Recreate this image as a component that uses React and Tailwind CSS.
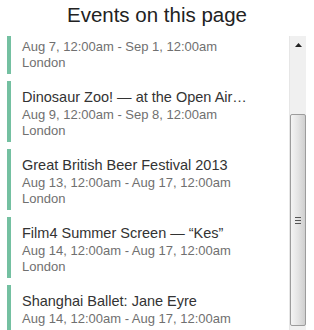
const EVENTS = [
  { title: 'The Old Vic Summer Season — Macbeth', when: 'Aug 7, 12:00am - Sep 1, 12:00am', where: 'London' },
  { title: 'Dinosaur Zoo! — at the Open Air Theatre', when: 'Aug 9, 12:00am - Sep 8, 12:00am', where: 'London' },
  { title: 'Great British Beer Festival 2013', when: 'Aug 13, 12:00am - Aug 17, 12:00am', where: 'London' },
  { title: 'Film4 Summer Screen — “Kes”', when: 'Aug 14, 12:00am - Aug 17, 12:00am', where: 'London' },
  { title: 'Shanghai Ballet: Jane Eyre', when: 'Aug 14, 12:00am - Aug 17, 12:00am', where: 'London' },
]

function EventCard({ event }) {
  return (
    <div className="ml-[7px] mr-[42px] flex h-[61px] flex-col border-l-4 border-[#74c0a1] pl-[11px] pt-[6px]">
      <div className="truncate text-[14.5px] leading-[20px] text-[#333]">{event.title}</div>
      <div className="text-[13px] leading-[16px] text-[#707070]">{event.when}</div>
      <div className="text-[13px] leading-[16px] text-[#707070]">{event.where}</div>
    </div>
  )
}

// Classic Windows-style scrollbar, drawn as a static column.
function Scrollbar() {
  return (
    <div className="flex w-[17px] shrink-0 flex-col border-l border-[#e6e6e6] bg-[#f0f0f0]">
      <div className="flex h-[17px] items-center justify-center">
        <svg width="7" height="4" viewBox="0 0 7 4">
          <path d="M3.5 0 L7 4 L0 4 Z" fill="#222" />
        </svg>
      </div>
      <div className="h-[61px]" />
      <div className="flex h-[212px] items-center justify-center rounded-[2px] border border-[#9c9c9c] bg-gradient-to-r from-[#f4f4f4] via-[#e4e4e4] to-[#cfcfcf]">
        <div className="flex flex-col gap-[2px]">
          <div className="h-px w-[6px] bg-[#555]" />
          <div className="h-px w-[6px] bg-[#555]" />
          <div className="h-px w-[6px] bg-[#555]" />
        </div>
      </div>
    </div>
  )
}

export default function App() {
  return (
    <div className="flex h-[330px] w-[314px] flex-col overflow-hidden bg-white font-['Liberation_Sans',Arial,sans-serif]">
      <div className="flex h-[36px] shrink-0 items-start justify-center pt-[2px] text-[20.5px] leading-[26px] text-[#222]">
        Events on this page
      </div>
      <div className="flex min-h-0 flex-1 pr-[8px]">
        <div className="min-w-0 flex-1 overflow-hidden">
          <div className="-mt-[23px] flex flex-col gap-[7px]">
            {EVENTS.map((e) => (
              <EventCard key={e.title} event={e} />
            ))}
          </div>
        </div>
        <Scrollbar />
      </div>
    </div>
  )
}
